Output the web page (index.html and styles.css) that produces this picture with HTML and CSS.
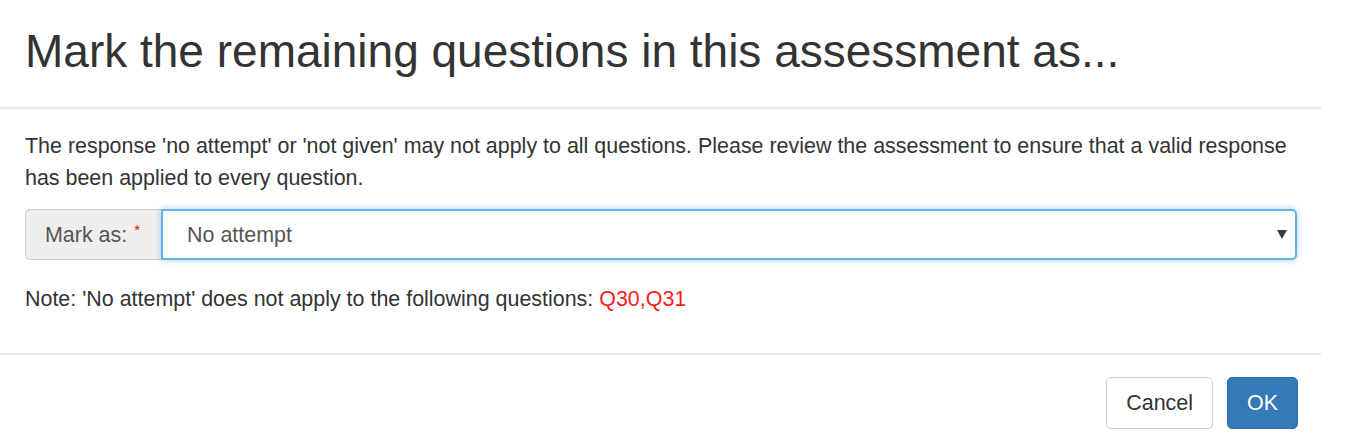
FILE: index.html
```html
<!DOCTYPE html>
<html lang="en">
<head>
<meta charset="utf-8">
<title>Mark remaining questions</title>
<link rel="stylesheet" href="styles.css">
</head>
<body>
<div class="modal">
  <div class="modal-header">
    <h1 class="modal-title">Mark the remaining questions in this assessment as...</h1>
  </div>
  <div class="modal-body">
    <p class="intro">The response 'no attempt' or 'not given' may not apply to all questions. Please review the assessment to ensure that a valid response has been applied to every question.</p>
    <div class="input-group">
      <div class="addon">Mark as:<span class="req">*</span></div>
      <div class="select">
        <span class="select-value">No attempt</span>
        <svg class="caret" width="10" height="9" viewBox="0 0 10 9"><polygon points="0,0 10,0 5,9" fill="#3d3d3d"/></svg>
      </div>
    </div>
    <p class="note">Note: 'No attempt' does not apply to the following questions: <span class="qs">Q30,Q31</span></p>
  </div>
  <div class="modal-footer">
    <button class="btn btn-default" type="button">Cancel</button>
    <button class="btn btn-primary" type="button">OK</button>
  </div>
</div>
</body>
</html>
```

FILE: styles.css
```css
html, body {
  margin: 0;
  padding: 0;
  background: #fff;
}
body {
  font-family: "Liberation Sans", Arial, sans-serif;
  color: #333;
  font-size: 21.45px;
  line-height: 32px;
}
.modal {
  width: 1321px;
  height: 442px;
  overflow: hidden;
}
.modal-header {
  padding: 25px 25px 29px;
  border-bottom: 2px solid #e9e9e9;
}
.modal-title {
  margin: 0;
  font-size: 46px;
  line-height: 53px;
  font-weight: normal;
  color: #333;
}
.modal-body {
  padding: 21px 24px 38px 25px;
}
.intro {
  margin: 0 0 15px;
}
.input-group {
  display: flex;
  height: 51px;
}
.addon {
  display: flex;
  align-items: center;
  padding: 0 21px 0 19px;
  background: #eeeeee;
  border: 1px solid #cccccc;
  border-right: 0;
  border-radius: 5px 0 0 5px;
  color: #555;
  white-space: nowrap;
}
.req {
  color: #f00;
  font-size: 15px;
  line-height: 1;
  position: relative;
  top: -5px;
  margin-left: 7px;
}
.select {
  flex: 1;
  display: flex;
  align-items: center;
  justify-content: space-between;
  padding: 0 8px 0 24px;
  border: 2px solid #66afe9;
  border-radius: 0 5px 5px 0;
  box-shadow: 0 0 6px rgba(102, 175, 233, 0.6);
  background: #fff;
  color: #555;
}
.caret {
  display: block;
}
.note {
  margin: 23px 0 0;
}
.qs {
  color: #fb1d1d;
}
.modal-footer {
  display: flex;
  justify-content: flex-end;
  gap: 14px;
  padding: 22px 23px 0;
  border-top: 2px solid #e9e9e9;
}
.btn {
  height: 52px;
  padding: 0 19px;
  font-family: "Liberation Sans", Arial, sans-serif;
  font-size: 21.45px;
  border-radius: 5px;
  border: 1.5px solid #ccc;
  background: #fff;
  color: #333;
}
.btn-primary {
  background: #337ab7;
  border-color: #2e6da4;
  color: #fff;
}
```
